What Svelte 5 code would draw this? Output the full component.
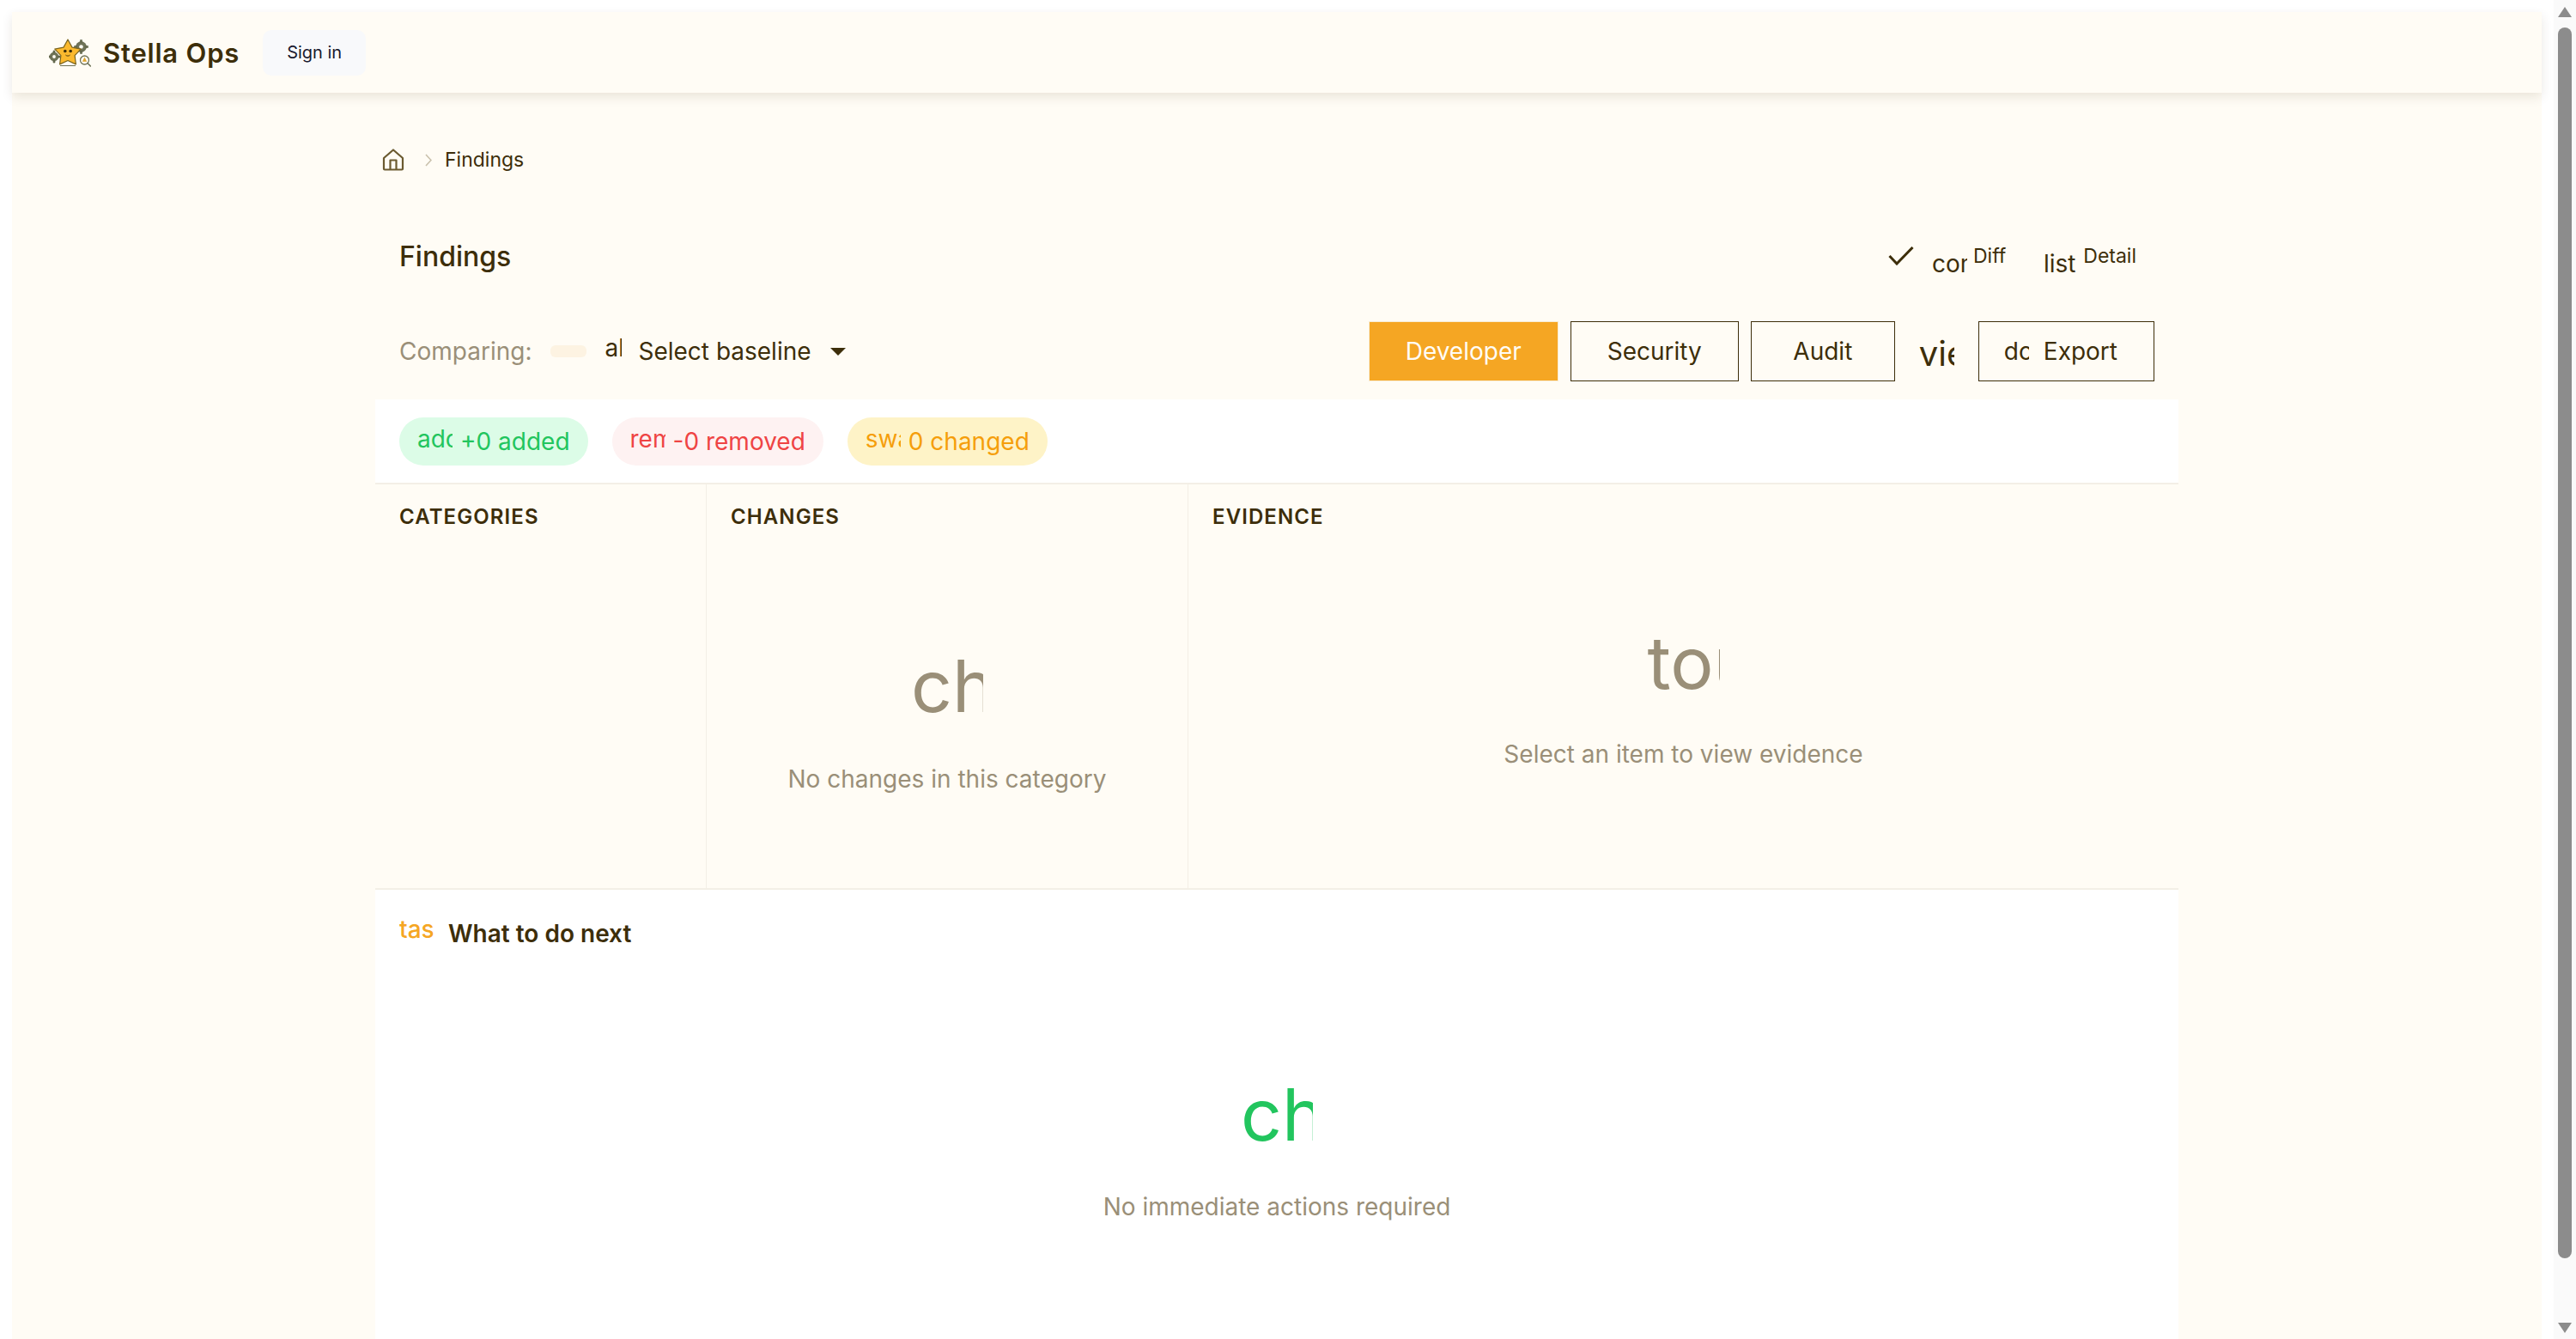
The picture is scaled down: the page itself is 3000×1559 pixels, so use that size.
<script>
  // Lens views for the findings page
  const lenses = [
    { label: 'Developer', active: true },
    { label: 'Security', active: false },
    { label: 'Audit', active: false }
  ];

  // Summary chips above the three panes
  const chips = [
    { kind: 'added', icon: 'add_circle', text: '+0 added' },
    { kind: 'removed', icon: 'remove_circle', text: '-0 removed' },
    { kind: 'changed', icon: 'swap_horiz', text: '0 changed' }
  ];
</script>

<div class="page">
  <div class="frame">
    <div class="app">
      <header class="topbar">
        <svg class="logo" viewBox="0 0 49 34" width="49" height="34" aria-hidden="true">
          <g fill="#6f7358" stroke="#565a40" stroke-width="0.6">
            <circle cx="6" cy="21" r="5" />
            <circle cx="37.500" cy="9.500" r="6" />
            <path d="M5 14h2v2.400H5zM5 25.600h2V28H5zM-1 20h2.400v2H-1zM10.600 20H13v2h-2.400zM36.500 1.500h2V4h-2zM36.500 15h2v2.500h-2zM29.500 8.500H32v2h-2.500zM43 8.500h2.500v2H43z" />
          </g>
          <circle cx="6" cy="21" r="1.900" fill="#fffcf5" />
          <circle cx="37.500" cy="9.500" r="2.300" fill="#fffcf5" />
          <path
            d="M22 1l5 9.100 10.200 1.950-7.100 7.550 1.300 10.300L22 25.500l-9.400 4.400 1.300-10.300-7.100-7.550L17 10.100z"
            fill="#fbb92e"
            stroke="#7a6520"
            stroke-width="1.200"
            stroke-linejoin="round"
          />
          <path d="M13 31.500h18" stroke="#6f7358" stroke-width="1" />
          <circle cx="18.800" cy="14.500" r="1.800" fill="#3d2e0a" />
          <circle cx="25.200" cy="14.500" r="1.800" fill="#3d2e0a" />
          <path d="M19.400 19c1.400 1.500 3.800 1.500 5.200 0" fill="none" stroke="#3d2e0a" stroke-width="0.900" />
          <circle cx="41.500" cy="25" r="5" fill="#fffcf5" stroke="#6f7358" stroke-width="1.300" />
          <path d="M41.500 21.500l2.600 5.300h-5.200z" fill="#e0a52c" />
          <path d="M45 28.500l3.400 3.500" stroke="#6f7358" stroke-width="1.600" stroke-linecap="round" />
        </svg>
        <span class="brand">Stella Ops</span>
        <button class="signin">Sign in</button>
      </header>

      <main class="content">
        <nav class="crumbs">
          <svg viewBox="0 0 26 26" width="26" height="26" fill="none" stroke="#6b5a30" stroke-width="2.200" stroke-linejoin="round" aria-hidden="true">
            <path d="M2 11L13 1.500 24 11v12.500a1 1 0 0 1-1 1H3a1 1 0 0 1-1-1z" />
            <path d="M9.500 24.500V13.500h7v11" />
          </svg>
          <svg class="chev" viewBox="0 0 8 15" width="8" height="15" fill="none" stroke="#c9c0ab" stroke-width="1.600" aria-hidden="true">
            <path d="M1 1l6 6.500-6 6.500" />
          </svg>
          <span>Findings</span>
        </nav>

        <div class="title-row">
          <h1>Findings</h1>
          <div class="modes">
            <button class="mode">
              <svg viewBox="0 0 30 22" width="30" height="22" fill="none" stroke="#3d2e0a" stroke-width="3" aria-hidden="true">
                <path d="M1.500 11l8.500 9L28.500 1" />
              </svg>
              <span class="glyph mode-glyph cor">compare_arrows</span>
              <span class="mode-label">Diff</span>
            </button>
            <button class="mode">
              <span class="glyph mode-glyph">list</span>
              <span class="mode-label">Detail</span>
            </button>
          </div>
        </div>

        <div class="toolbar">
          <div class="compare">
            <span class="muted">Comparing:</span>
            <span class="skeleton"></span>
            <span class="glyph baseline-glyph">all_inclusive</span>
            <button class="select">
              Select baseline
              <svg viewBox="0 0 18 9" width="18" height="9" aria-hidden="true"><path d="M0 0h18L9 9z" fill="#3d2e0a" /></svg>
            </button>
          </div>
          <div class="actions">
            {#each lenses as lens}
              <button class="btn" class:active={lens.active}>{lens.label}</button>
            {/each}
            <span class="glyph view-glyph">view_list</span>
            <button class="btn export">
              <span class="glyph export-glyph">download</span>
              Export
            </button>
          </div>
        </div>

        <div class="summary">
          {#each chips as chip}
            <span class="chip {chip.kind}">
              <span class="glyph chip-glyph">{chip.icon}</span>
              {chip.text}
            </span>
          {/each}
        </div>

        <section class="panes">
          <div class="pane">
            <h2>CATEGORIES</h2>
          </div>
          <div class="pane">
            <h2>CHANGES</h2>
            <div class="empty empty-changes">
              <span class="glyph big">check_circle</span>
              <p>No changes in this category</p>
            </div>
          </div>
          <div class="pane">
            <h2>EVIDENCE</h2>
            <div class="empty empty-evidence">
              <span class="glyph big">touch_app</span>
              <p>Select an item to view evidence</p>
            </div>
          </div>
        </section>

        <section class="next">
          <div class="next-head">
            <span class="glyph task">task_alt</span>
            <h3>What to do next</h3>
          </div>
          <div class="empty empty-next">
            <span class="glyph big green">check_circle</span>
            <p>No immediate actions required</p>
          </div>
        </section>
      </main>
    </div>
  </div>

  <div class="scrollbar">
    <svg viewBox="0 0 16 12" width="16" height="12" aria-hidden="true"><path d="M8 0l8 12H0z" fill="#8c8c8c" /></svg>
    <div class="thumb"></div>
    <svg viewBox="0 0 16 12" width="16" height="12" aria-hidden="true"><path d="M0 0h16L8 12z" fill="#8c8c8c" /></svg>
  </div>
</div>

<style>
  :global(body) {
    margin: 0;
    background: #fff;
    font-family: Inter, 'Liberation Sans', sans-serif;
    color: #3d2e0a;
  }

  button {
    font-family: inherit;
    color: inherit;
    background: none;
    border: none;
    padding: 0;
  }

  .page {
    display: flex;
    height: 1559px;
    overflow: hidden;
  }

  .frame {
    flex: 1;
    min-width: 0;
    padding: 14px 14px 0;
  }

  .app {
    height: 100%;
    background: #fffcf5;
  }

  .topbar {
    display: flex;
    align-items: center;
    height: 94px;
    padding-left: 43px;
    box-shadow: 0 5px 12px rgba(61, 46, 10, 0.11);
  }

  .logo {
    margin-top: 2px;
  }

  .brand {
    margin-left: 14px;
    font-size: 31px;
    font-weight: 600;
    letter-spacing: 0.8px;
  }

  .signin {
    margin-left: 27px;
    width: 120px;
    height: 53px;
    border-radius: 10px;
    background: #f8f9fb;
    color: #1a1a2e;
    font-size: 20px;
  }

  .content {
    width: 2100px;
    margin: 0 auto;
    padding-top: 65px;
  }

  .crumbs {
    display: flex;
    align-items: center;
    height: 26px;
    padding-left: 8px;
    font-size: 23px;
  }

  .chev {
    margin-left: 24px;
  }

  .crumbs span {
    margin-left: 15px;
  }

  .glyph {
    display: block;
    flex: none;
    overflow: hidden;
    white-space: nowrap;
  }

  .title-row {
    display: flex;
    align-items: center;
    justify-content: space-between;
    height: 60px;
    margin-top: 69px;
    padding: 0 49px 0 28px;
  }

  h1 {
    margin: 0;
    font-size: 32px;
    font-weight: 500;
  }

  .modes {
    display: flex;
    gap: 42px;
    margin-top: 12px;
  }

  .mode {
    display: flex;
    align-items: flex-start;
  }

  .mode svg {
    margin-top: 3px;
    margin-right: 21px;
  }

  .mode-glyph {
    margin-top: 5px;
    width: 41px;
    font-size: 28px;
    line-height: 36px;
  }

  .mode-label {
    margin-left: 7px;
    font-size: 23px;
    line-height: 28px;
  }

  .toolbar {
    display: flex;
    align-items: center;
    justify-content: space-between;
    height: 70px;
    margin-top: 46px;
    padding: 0 28px;
  }

  .compare,
  .actions {
    display: flex;
    align-items: center;
  }

  .muted {
    color: #9a8f78;
    font-size: 28px;
  }

  .skeleton {
    width: 42px;
    height: 14px;
    margin-left: 22px;
    border-radius: 6px;
    background: #fdf3e2;
  }

  .baseline-glyph {
    width: 20px;
    margin-left: 21px;
    margin-bottom: 8px;
    font-size: 28px;
  }

  .select {
    display: flex;
    align-items: center;
    gap: 22px;
    margin-left: 19px;
    font-size: 28px;
  }

  .actions {
    gap: 14px;
  }

  .btn {
    height: 70px;
    min-width: 168px;
    padding: 0 42px;
    border: 1px solid #3d2e0a;
    font-size: 28px;
  }

  .btn.active {
    background: #f5a623;
    border-color: #f8ecd4;
    color: #fffcf5;
  }

  .view-glyph {
    width: 41px;
    margin: 4px 14px 0;
    font-size: 40px;
  }

  .export {
    display: flex;
    align-items: center;
    gap: 17px;
    padding: 0 42px 0 29px;
  }

  .export-glyph {
    width: 29px;
    font-size: 28px;
  }

  .summary {
    display: flex;
    align-items: center;
    gap: 28px;
    height: 97px;
    margin-top: 21px;
    padding-left: 28px;
    background: #fff;
    border-bottom: 2px solid #f3efe6;
  }

  .chip {
    display: flex;
    align-items: center;
    gap: 9px;
    height: 56px;
    padding: 0 21px;
    border-radius: 28px;
    font-size: 28px;
  }

  .chip-glyph {
    width: 41px;
    margin-bottom: 6px;
    font-size: 28px;
  }

  .added {
    background: #dcfce7;
    color: #22c55e;
  }

  .removed {
    background: #fef2f2;
    color: #ef4444;
  }

  .changed {
    background: #fef3c7;
    color: #f59e0b;
  }

  .panes {
    display: grid;
    grid-template-columns: 385px 561px 1fr;
    height: 470px;
    border-bottom: 2px solid #f3efe6;
  }

  .pane {
    padding: 23px 28px 0;
  }

  .pane + .pane {
    border-left: 1px solid #f3efe6;
  }

  h2 {
    margin: 0;
    font-size: 24px;
    line-height: 30px;
    font-weight: 600;
    letter-spacing: 1.1px;
  }

  .empty {
    display: flex;
    flex-direction: column;
    align-items: center;
    color: #9a8f78;
  }

  .empty p {
    margin: 0;
    font-size: 28px;
  }

  .big {
    width: 84px;
    font-size: 84px;
    line-height: 100px;
  }

  .green {
    color: #22c55e;
  }

  .empty-changes {
    margin-top: 132px;
  }

  .empty-evidence {
    margin-top: 105px;
  }

  .empty-changes p {
    margin-top: 41px;
  }

  .empty-evidence p {
    margin-top: 39px;
  }

  .next {
    height: 530px;
    background: #fff;
  }

  .next-head {
    display: flex;
    align-items: flex-start;
    gap: 15px;
    padding: 29px 28px 0;
  }

  .task {
    width: 42px;
    font-size: 28px;
    font-weight: 500;
    color: #f5a623;
  }

  h3 {
    margin: 0;
    font-size: 28px;
    font-weight: 600;
    line-height: 44px;
  }

  .empty-next {
    margin-top: 139px;
  }

  .empty-next p {
    margin-top: 40px;
  }

  .scrollbar {
    display: flex;
    flex: none;
    flex-direction: column;
    align-items: center;
    width: 26px;
    padding: 8px 0 7px;
    box-sizing: border-box;
    background: #fafafa;
  }

  .thumb {
    width: 16px;
    flex: 1;
    margin: 12px 0 75px;
    border-radius: 8px;
    background: #8c8c8c;
  }
</style>
